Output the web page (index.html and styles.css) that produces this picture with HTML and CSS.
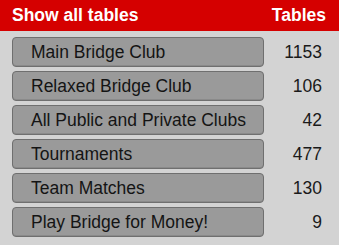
FILE: index.html
```html
<!DOCTYPE html>
<html>
<head>
<meta charset="utf-8">
<link rel="stylesheet" href="styles.css">
</head>
<body>
<div class="header">
  <span class="title">Show all tables</span>
  <span class="title">Tables</span>
</div>
<div class="list">
  <div class="row"><div class="btn">Main Bridge Club</div><div class="num">1153</div></div>
  <div class="row"><div class="btn">Relaxed Bridge Club</div><div class="num">106</div></div>
  <div class="row"><div class="btn">All Public and Private Clubs</div><div class="num">42</div></div>
  <div class="row"><div class="btn">Tournaments</div><div class="num">477</div></div>
  <div class="row"><div class="btn">Team Matches</div><div class="num">130</div></div>
  <div class="row"><div class="btn">Play Bridge for Money!</div><div class="num">9</div></div>
</div>
</body>
</html>
```
FILE: styles.css
```css
html, body {
  margin: 0;
  padding: 0;
  background: #d3d3d3;
  font-family: "Liberation Sans", Arial, sans-serif;
  width: 339px;
  height: 245px;
  overflow: hidden;
}
.header {
  height: 31px;
  background: #d50000;
  display: flex;
  justify-content: space-between;
  align-items: center;
  padding: 0 13px 0 12px;
}
.title {
  color: #fff;
  font-weight: bold;
  font-size: 17.5px;
}
.list {
  padding: 6px 17px 0 12px;
  display: flex;
  flex-direction: column;
  gap: 4px;
}
.row {
  display: flex;
  align-items: center;
  justify-content: space-between;
  height: 30px;
}
.btn {
  box-sizing: border-box;
  width: 252px;
  height: 30px;
  background: #9a9a9a;
  border: 1px solid #6f6f6f;
  border-radius: 4px;
  box-shadow: inset 0 -1px 0 #8a8a8a;
  color: #141414;
  font-size: 17.5px;
  line-height: 28px;
  padding-left: 18px;
  white-space: nowrap;
}
.num {
  color: #1a1a1a;
  font-size: 17.5px;
  text-align: right;
}
```
